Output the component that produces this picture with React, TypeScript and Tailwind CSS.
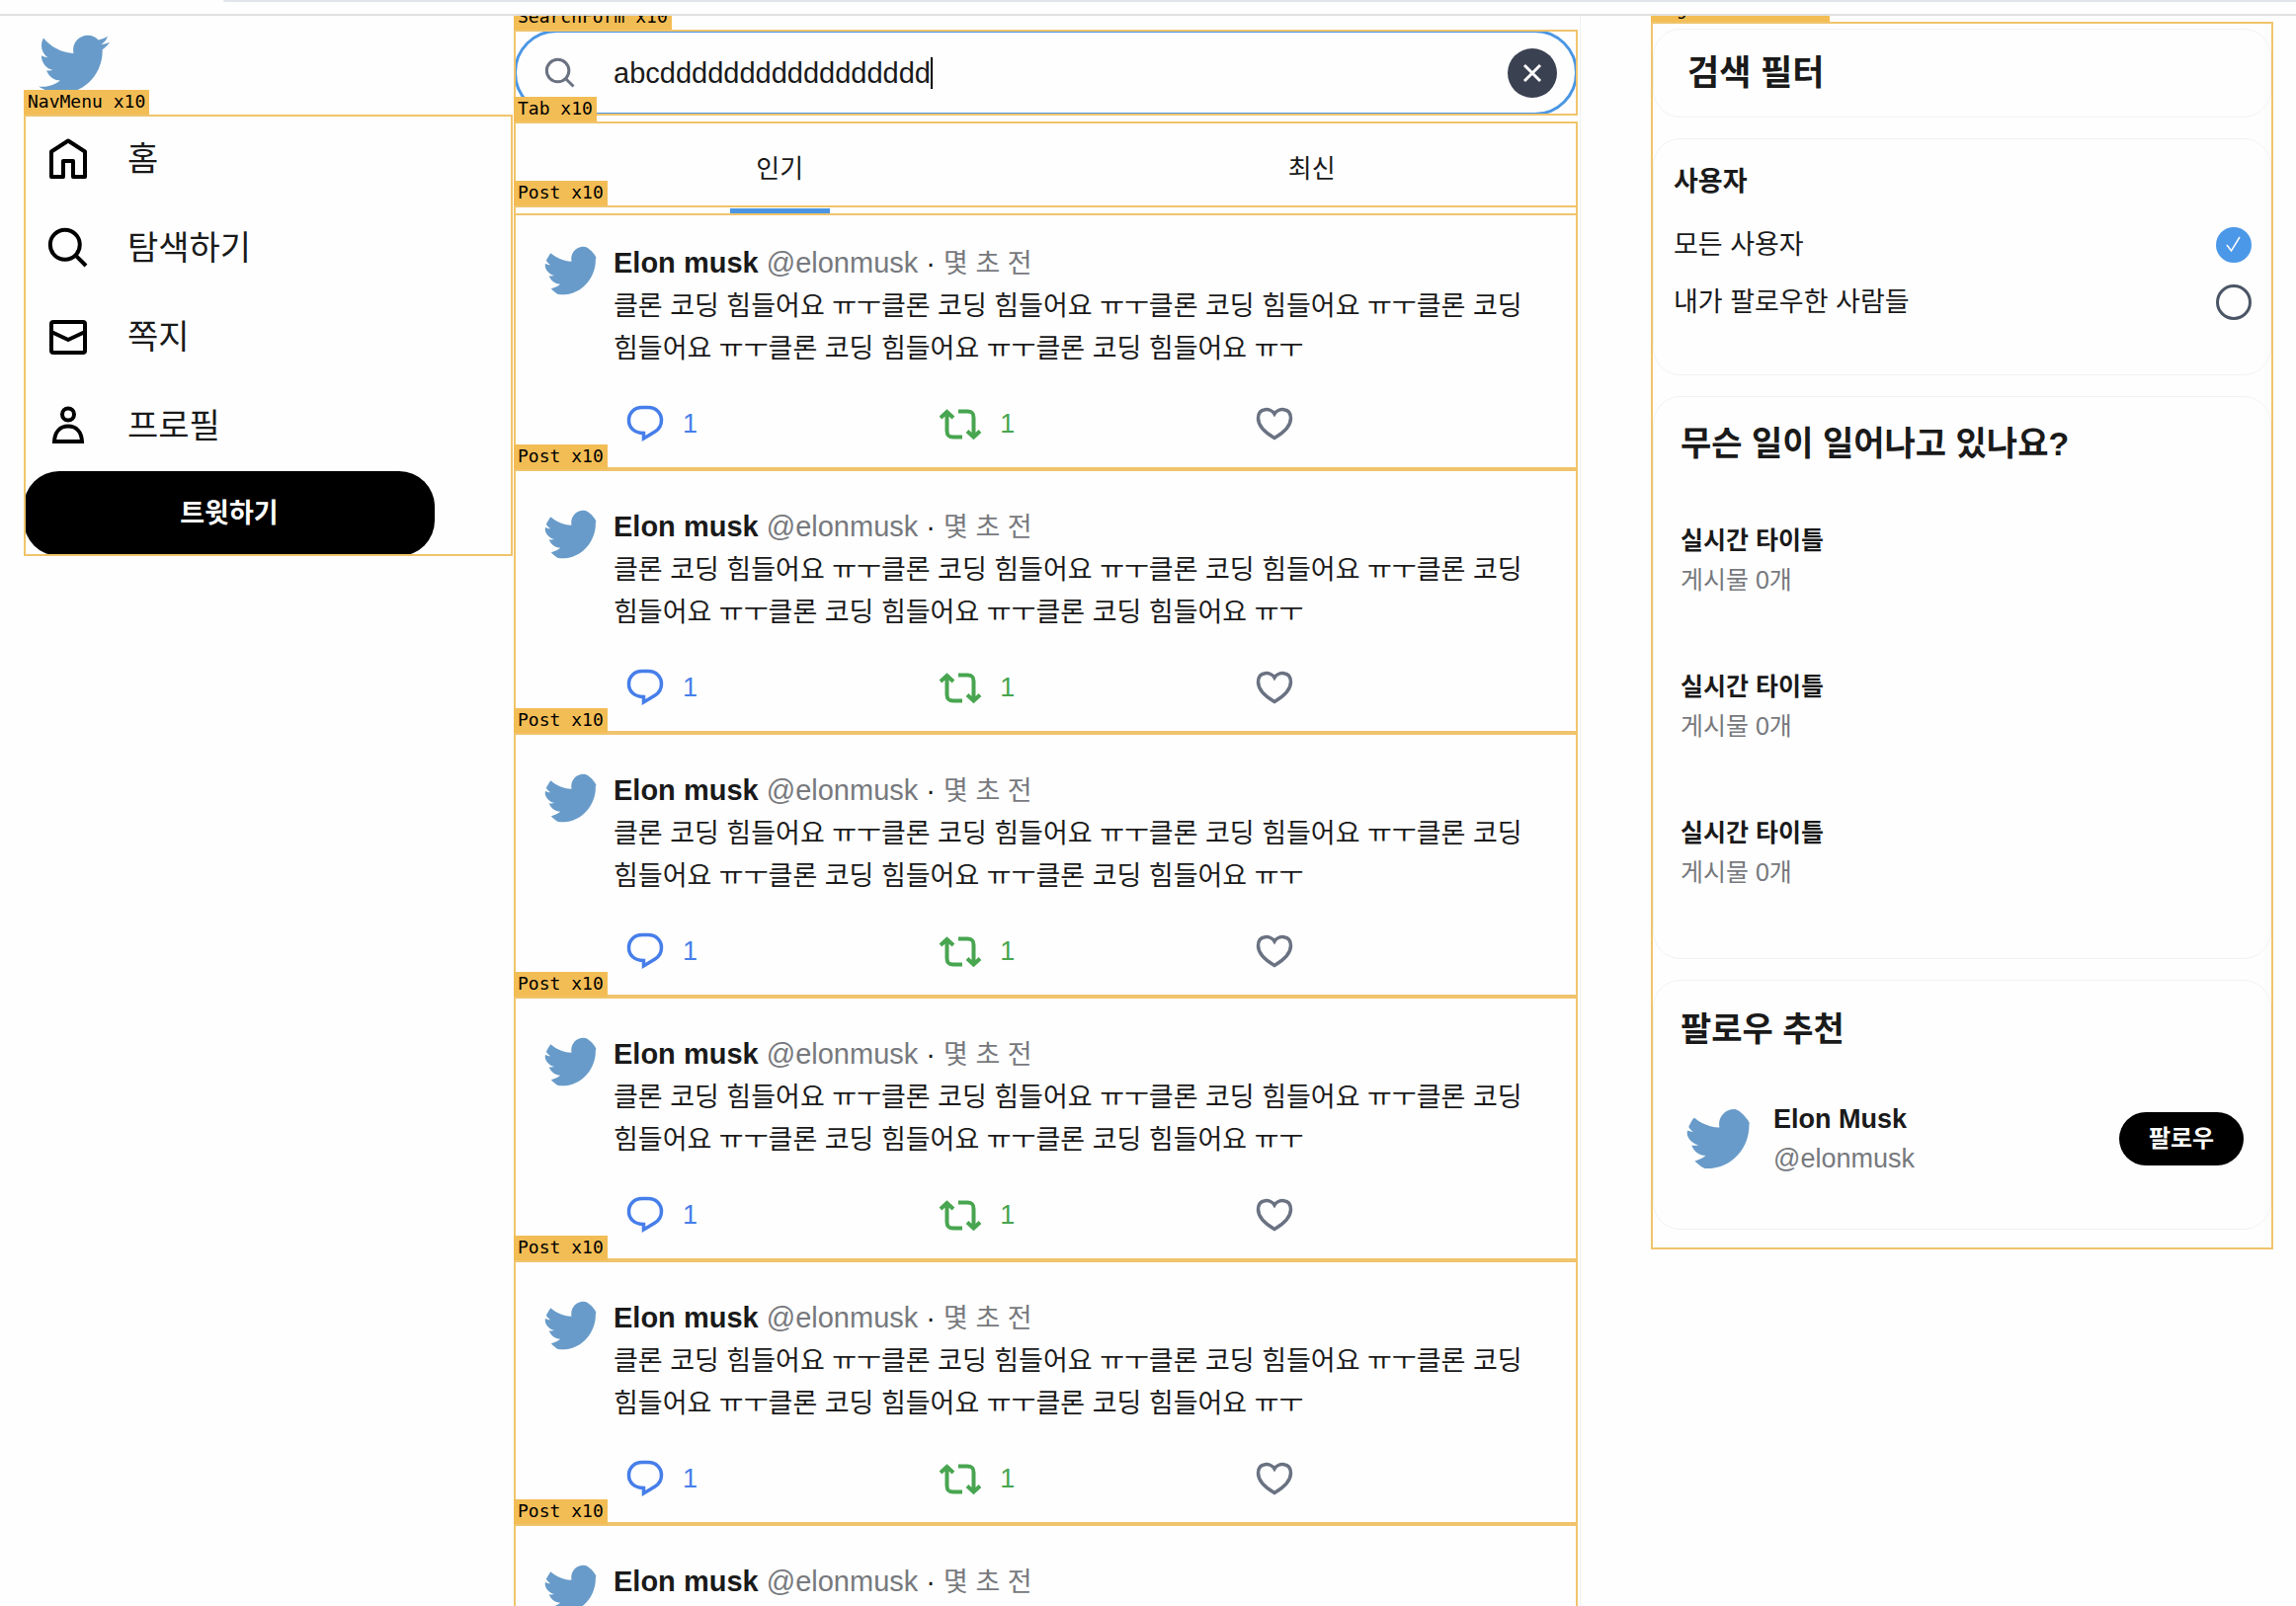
import { ReactNode, useState } from "react";
import { FaTwitter } from "react-icons/fa";

const navItems = [
    { label: "홈", icon: <HomeIcon /> },
    { label: "탐색하기", icon: <SearchIcon className="size-12" strokeWidth={2} /> },
    { label: "쪽지", icon: <MailIcon /> },
    { label: "프로필", icon: <UserIcon /> },
];

const posts = Array.from({ length: 6 }, (_, id) => ({
    id,
    name: "Elon musk",
    handle: "@elonmusk",
    time: "몇 초 전",
    body: "클론 코딩 힘들어요 ㅠㅜ".repeat(6),
    comments: 1,
    retweets: 1,
}));

const trends = [
    { id: 1, title: "실시간 타이틀", count: 0 },
    { id: 2, title: "실시간 타이틀", count: 0 },
    { id: 3, title: "실시간 타이틀", count: 0 },
];

function HomeIcon() {
    return (
        <svg viewBox="0 0 48 48" className="size-12" fill="none" stroke="currentColor" strokeWidth={4} strokeLinejoin="round">
            <path d="M24 5.5 L41 16.5 V42 H29 V26 H19 V42 H7 V16.5 Z" />
        </svg>
    );
}

function SearchIcon({ className, strokeWidth }: { className: string; strokeWidth: number }) {
    return (
        <svg viewBox="0 0 24 24" className={className} fill="none" stroke="currentColor" strokeWidth={strokeWidth}>
            <circle cx="10.4" cy="10.4" r="7.5" />
            <path d="M15.8 15.8 L21 21" />
        </svg>
    );
}

function MailIcon() {
    return (
        <svg viewBox="0 0 48 48" className="size-12" fill="none" stroke="currentColor" strokeWidth={4} strokeLinejoin="round">
            <rect x="7" y="9" width="34" height="31" rx="2" />
            <path d="M7 19 L24 27 L41 19" />
        </svg>
    );
}

function UserIcon() {
    return (
        <svg viewBox="0 0 48 48" className="size-12" fill="none" stroke="currentColor" strokeWidth={4}>
            <circle cx="24" cy="12.5" r="6" />
            <path d="M10 40 C10.5 30 16 24.5 24 24.5 C32 24.5 37.5 30 38 40 Z" />
        </svg>
    );
}

function CommentIcon() {
    return (
        <svg viewBox="0 0 40 40" className="size-10" fill="none" stroke="currentColor" strokeWidth={3.5}>
            <path d="M17 3.5 H23 C31 3.5 36.5 9 36.5 16.5 C36.5 22 34 25.5 30 28 L18.5 35 V29.5 C9 29.5 3.5 24 3.5 16.5 C3.5 9 9 3.5 17 3.5 Z" />
        </svg>
    );
}

function RetweetIcon() {
    return (
        <svg viewBox="0 0 44 40" className="h-10 w-11" fill="none" stroke="currentColor" strokeWidth={4}>
            <path d="M2 14 L8.5 8 L15 14 M8.5 8 V27 C8.5 32 10 33.5 15 33.5 H24" />
            <path d="M42 27.5 L35.5 33.5 L29 27.5 M35.5 33.5 V14 C35.5 9 34 7.5 29 7.5 H20" />
        </svg>
    );
}

function HeartIcon() {
    return (
        <svg viewBox="0 0 44 40" className="h-10 w-11" fill="none" stroke="currentColor" strokeWidth={3.5}>
            <path d="M22 10 C18.5 4 5.5 3 5.5 14.5 C5.5 23 13.5 29.5 22 34.5 C30.5 29.5 38.5 23 38.5 14.5 C38.5 3 25.5 4 22 10 Z" />
        </svg>
    );
}

// render counter overlay: a coloured frame with the component name above it
function Traced({ name, count = 10, className = "", children }: { name: string; count?: number; className?: string; children: ReactNode }) {
    return (
        <div className={`relative ${className}`}>
            {children}
            <div className="pointer-events-none absolute inset-0 z-10 border-2 border-[#f0c46c]">
                <span className="absolute -left-0.5 bottom-full mb-0.5 bg-[#f3bd55] px-1 pb-0.5 font-['DejaVu_Sans_Mono',monospace] text-[18px] leading-[23px] whitespace-nowrap text-black">
                    {name} x{count}
                </span>
            </div>
        </div>
    );
}

function Avatar({ large = false }: { large?: boolean }) {
    return (
        <div className={`flex shrink-0 items-center justify-center overflow-hidden rounded-full text-[#689bc9] ${large ? "size-[68px]" : "size-14"}`}>
            <FaTwitter className={`shrink-0 ${large ? "size-[74px]" : "size-[60px]"}`} />
        </div>
    );
}

function NavMenu() {
    return (
        <nav>
            {navItems.map((item) => (
                <a key={item.label} href="#" className="flex h-[90px] items-center gap-9 pl-[21px] text-[34px]">
                    <span className="text-black">{item.icon}</span>
                    {item.label}
                </a>
            ))}
            <button className="mt-px h-[86px] w-[84%] rounded-[36px] bg-black text-[27px] font-bold text-white">트윗하기</button>
        </nav>
    );
}

function SearchForm() {
    const [query, setQuery] = useState("abcddddddddddddddddd");

    return (
        <form className="flex h-[87px] items-center rounded-full border-3 border-[#4b96e3] pr-[18px] pl-[26px]" onSubmit={(e) => e.preventDefault()}>
            <SearchIcon className="size-9 shrink-0 text-gray-500" strokeWidth={2} />
            <label htmlFor="query" className="sr-only">검색</label>
            <div className="ml-9 flex flex-1 items-center">
                <input
                    id="query"
                    value={query}
                    onChange={(e) => setQuery(e.target.value)}
                    className="field-sizing-content pt-0.5 text-[29px] outline-none"
                />
                <span className="h-8 w-0.5 bg-black" />
            </div>
            <button type="button" aria-label="지우기" onClick={() => setQuery("")} className="flex size-[50px] items-center justify-center rounded-full bg-[#3a4151] text-white">
                <svg viewBox="0 0 20 20" className="size-5" stroke="currentColor" strokeWidth={3}>
                    <path d="M2 2 L18 18 M18 2 L2 18" />
                </svg>
            </button>
        </form>
    );
}

function Tab() {
    const [active, setActive] = useState("인기");

    return (
        <div className="grid h-[95px] grid-cols-2" role="tablist">
            {["인기", "최신"].map((tab) => (
                <button key={tab} role="tab" aria-selected={tab === active} onClick={() => setActive(tab)} className="flex flex-col items-center justify-between pt-[30px] text-[26px] leading-9">
                    {tab}
                    {tab === active && <span className="h-[7px] w-[101px] bg-[#4b96e3]" />}
                </button>
            ))}
        </div>
    );
}

function Post({ post }: { post: (typeof posts)[number] }) {
    return (
        <article className="flex h-[267px] gap-3.5 pt-[37px] pr-3 pl-[31px]">
            <div className="pt-px">
                <Avatar />
            </div>
            <div className="flex-1">
                <p className="text-[29px] leading-[43px]">
                    <strong>{post.name}</strong> <span className="text-[#77797d]">{post.handle}</span> ·{" "}
                    <span className="text-[27px] text-[#77797d]">{post.time}</span>
                </p>
                <p className="pr-3 text-[27px] leading-[43px] break-keep">{post.body}</p>
                <div className="mt-[34px] grid grid-cols-3 pl-3 text-[27px]">
                    <button className="flex items-center gap-[18px] text-[#467eea]">
                        <CommentIcon /> {post.comments}
                    </button>
                    <button className="flex items-center gap-[18px] text-[#48a550]">
                        <RetweetIcon /> {post.retweets}
                    </button>
                    <button aria-label="좋아요" className="flex items-center text-gray-500">
                        <HeartIcon />
                    </button>
                </div>
            </div>
        </article>
    );
}

function Card({ className = "", children }: { className?: string; children: ReactNode }) {
    return <section className={`rounded-[28px] border border-[#f1f2f4] ${className}`}>{children}</section>;
}

function UserFilter() {
    const [value, setValue] = useState("all");
    const options = [
        { id: "all", label: "모든 사용자" },
        { id: "following", label: "내가 팔로우한 사람들" },
    ];

    return (
        <fieldset className="text-[27px]">
            <legend className="h-10 font-bold leading-10">사용자</legend>
            <div className="pt-[15px]">
                {options.map((option) => (
                    <label key={option.id} className="flex h-[58px] items-center justify-between">
                        {option.label}
                        <span className="relative size-9">
                            <input
                                type="radio"
                                name="user-filter"
                                checked={value === option.id}
                                onChange={() => setValue(option.id)}
                                className="block size-9 appearance-none rounded-full border-3 border-gray-600 checked:border-0 checked:bg-[#4b98e8]"
                            />
                            {value === option.id && (
                                <svg viewBox="0 0 36 36" className="absolute inset-0" fill="none" stroke="white" strokeWidth={1.5}>
                                    <path d="M11 18 L15.5 24 L24 10" />
                                </svg>
                            )}
                        </span>
                    </label>
                ))}
            </div>
        </fieldset>
    );
}

function RightSidebar() {
    return (
        <aside className="flex flex-col gap-[21px] px-0.5 pt-[7px] pb-5">
            <Card className="px-[34px] py-4">
                <h2 className="text-[35px] leading-[56px] font-bold">검색 필터</h2>
            </Card>
            <Card className="pt-[23px] pr-[19px] pb-11 pl-5">
                <UserFilter />
            </Card>
            <Card className="px-[27px] pt-[19px] pb-[67px]">
                <h2 className="text-[34px] leading-[56px] font-bold">무슨 일이 일어나고 있나요?</h2>
                <ul className="flex flex-col gap-[68px] pt-[50px]">
                    {trends.map((trend) => (
                        <li key={trend.id} className="text-[25px] leading-10">
                            <p className="font-bold">{trend.title}</p>
                            <p className="text-[#77797d]">게시물 {trend.count}개</p>
                        </li>
                    ))}
                </ul>
            </Card>
            <Card className="px-[27px] pt-[21px] pb-[51px]">
                <h2 className="text-[34px] leading-[56px] font-bold">팔로우 추천</h2>
                <div className="flex items-center gap-5 pt-[43px] pl-1.5">
                    <Avatar large />
                    <div className="flex-1 text-[27px] leading-10">
                        <p className="font-bold">Elon Musk</p>
                        <p className="text-[#77797d]">@elonmusk</p>
                    </div>
                    <button className="h-[54px] w-[126px] rounded-full bg-black text-[24px] font-bold text-white">팔로우</button>
                </div>
            </Card>
        </aside>
    );
}

export default function App() {
    return (
        <div className="h-screen overflow-hidden bg-[#fefefe] font-['Liberation_Sans','Noto_Sans_CJK_KR',sans-serif] text-[#1a1a1a]">
            <header className="relative z-20 h-4 border-b-2 border-[#e0e0e0] bg-[#fefefe]">
                <div className="ml-[226px] h-0.5 rounded-bl-full bg-[#e1e5ea]" />
            </header>
            <div className="grid grid-cols-[519fr_1081fr_724fr]">
                <div className="pl-6">
                    <a href="#" aria-label="Twitter" className="flex h-[100px] items-center pb-0.5 pl-[15px] text-[#689bc9]">
                        <FaTwitter className="size-[72px]" />
                    </a>
                    <Traced name="NavMenu">
                        <NavMenu />
                    </Traced>
                </div>
                <main className="border-r border-[#eef0f2] pt-3.5 pr-0.5 pl-px">
                    <Traced name="SearchForm">
                        <SearchForm />
                    </Traced>
                    <Traced name="Tab" className="mt-1.5">
                        <Tab />
                    </Traced>
                    {/* the feed slides under the active tab's bar */}
                    <div className="-mt-2.5">
                        {posts.map((post) => (
                            <Traced key={post.id} name="Post">
                                <Post post={post} />
                            </Traced>
                        ))}
                    </div>
                </main>
                <div className="pt-1.5 pr-[23px] pl-[71px]">
                    <Traced name="RightSidebar">
                        <RightSidebar />
                    </Traced>
                </div>
            </div>
        </div>
    );
}
